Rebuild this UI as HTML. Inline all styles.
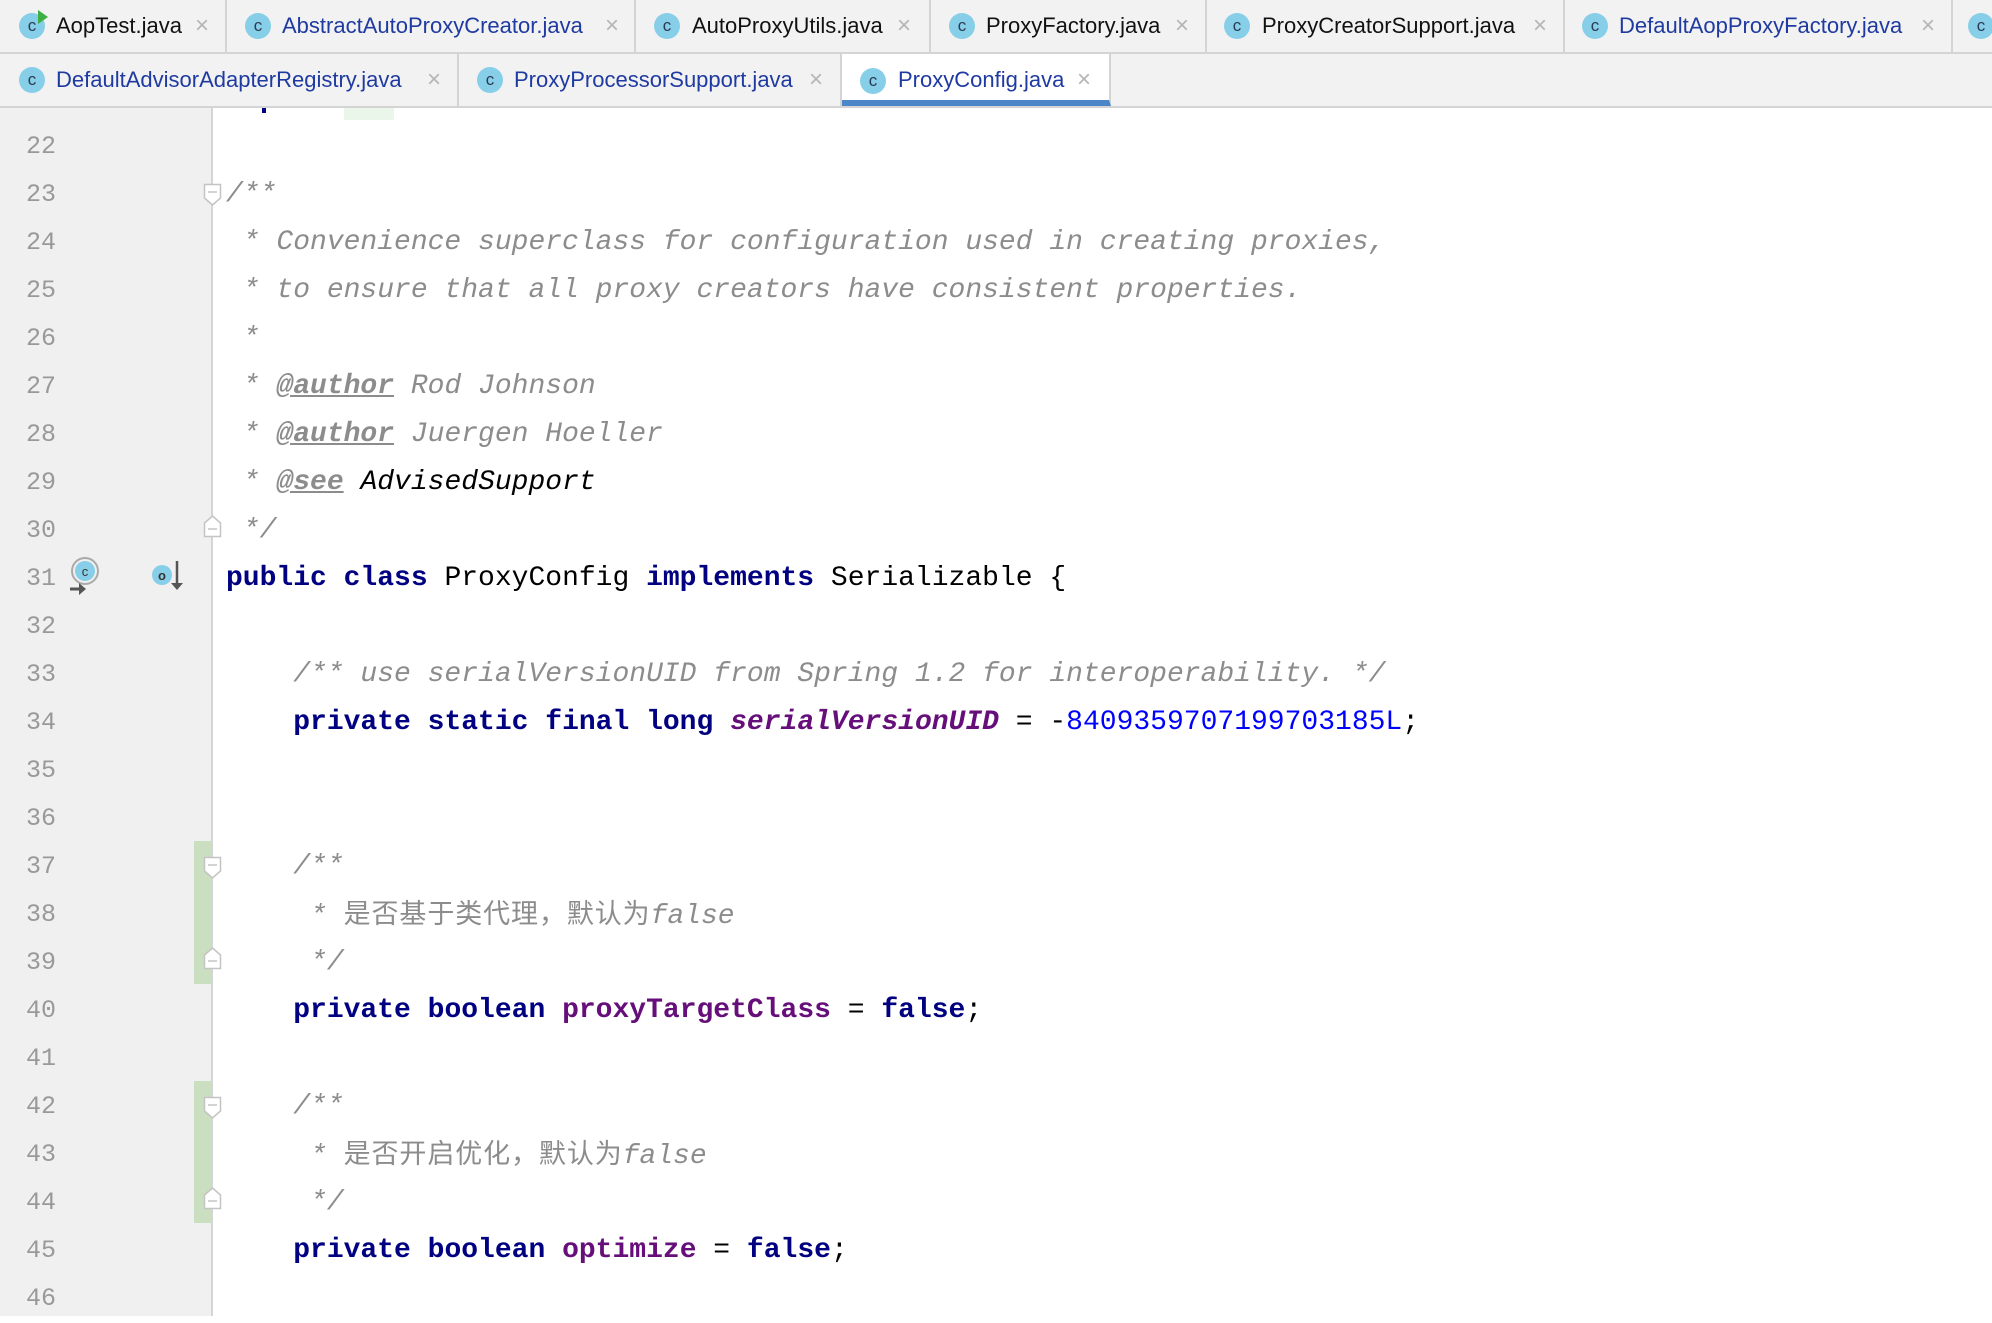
<!DOCTYPE html>
<html><head><meta charset="utf-8"><style>
*{margin:0;padding:0;box-sizing:border-box}
body{width:1992px;height:1316px;overflow:hidden;background:#fff;position:relative;font-family:"Liberation Sans",sans-serif}
.tabrow{position:absolute;left:0;width:1992px;height:54px;background:#f2f2f2;border-bottom:2px solid #d4d4d4}
.tab{position:absolute;top:0;height:52px;border-right:2px solid #d4d4d4}
.ic{position:absolute;top:13px;width:26px;height:26px;border-radius:50%;background:#87cfe8;color:#2b3a55;font-size:17px;line-height:25px;text-align:center;font-family:"Liberation Sans",sans-serif}
.tt{position:absolute;top:0;line-height:52px;font-size:22px;white-space:nowrap}
.x{position:absolute;top:0;line-height:52px;font-size:24px;color:#b5b5b5}
.blue{color:#1f3aa0}.blk{color:#111}
.gut{position:absolute;left:0;top:108px;width:213px;height:1208px;background:#f0f0f0;border-right:2px solid #d5d5d5}
.ln{position:absolute;left:0;width:56px;text-align:right;font-family:"Liberation Mono",monospace;font-size:25px;color:#999;height:48px;line-height:48px}
.cl{position:absolute;left:226px;height:48px;line-height:48px;font-family:"Liberation Mono","Noto Sans CJK SC",monospace;font-size:28px;white-space:pre;color:#000}
.c{color:#8c8c8c;font-style:italic}
.k{color:#000080;font-weight:bold}
.f{color:#660e7a;font-weight:bold}
.fi{color:#660e7a;font-weight:bold;font-style:italic}
.n{color:#0000ff}
.tag{color:#8c8c8c;font-weight:bold;text-decoration:underline}
.cjk{font-family:"Noto Sans CJK SC",sans-serif;font-style:normal;letter-spacing:0.9px;font-size:27px}
.bar{position:absolute;left:194px;width:18px;background:#c9dfc0}
.fold{position:absolute;left:203px}
</style></head><body>

<div class="tabrow" style="top:0">
 <div class="tab" style="left:0;width:227px"><div class="ic" style="left:19px">c</div><div style="position:absolute;left:38px;top:10px;width:0;height:0;border-left:10px solid #3cb043;border-top:7px solid transparent;border-bottom:7px solid transparent"></div><div class="tt blk" style="left:56px">AopTest.java</div><div class="x" style="left:195px">×</div></div>
 <div class="tab" style="left:227px;width:409px"><div class="ic" style="left:18px">c</div><div class="tt blue" style="left:55px">AbstractAutoProxyCreator.java</div><div class="x" style="left:378px">×</div></div>
 <div class="tab" style="left:636px;width:295px"><div class="ic" style="left:18px">c</div><div class="tt blk" style="left:56px">AutoProxyUtils.java</div><div class="x" style="left:261px">×</div></div>
 <div class="tab" style="left:931px;width:276px"><div class="ic" style="left:18px">c</div><div class="tt blk" style="left:55px">ProxyFactory.java</div><div class="x" style="left:244px">×</div></div>
 <div class="tab" style="left:1207px;width:358px"><div class="ic" style="left:17px">c</div><div class="tt blk" style="left:55px">ProxyCreatorSupport.java</div><div class="x" style="left:326px">×</div></div>
 <div class="tab" style="left:1565px;width:388px"><div class="ic" style="left:17px">c</div><div class="tt blue" style="left:54px">DefaultAopProxyFactory.java</div><div class="x" style="left:356px">×</div></div>
 <div class="ic" style="left:1968px">c</div>
</div>
<div class="tabrow" style="top:54px">
 <div class="tab" style="left:0;width:459px"><div class="ic" style="left:19px">c</div><div class="tt blue" style="left:56px">DefaultAdvisorAdapterRegistry.java</div><div class="x" style="left:427px">×</div></div>
 <div class="tab" style="left:459px;width:383px"><div class="ic" style="left:18px">c</div><div class="tt blue" style="left:55px">ProxyProcessorSupport.java</div><div class="x" style="left:350px">×</div></div>
 <div class="tab" style="left:842px;width:269px;background:#fff;height:52px;border-bottom:6px solid #4a86c8"><div class="ic" style="left:18px;top:14px">c</div><div class="tt blue" style="left:56px;line-height:52px">ProxyConfig.java</div><div class="x" style="left:235px;line-height:52px">×</div></div>
</div>

<div class="gut"></div>
<div style="position:absolute;left:344px;top:108px;width:50px;height:12px;background:#eaf6ea"></div>
<div style="position:absolute;left:262px;top:108px;width:4px;height:5px;background:#000080"></div>

<div class="bar" style="top:841px;height:143px"></div>
<div class="bar" style="top:1081px;height:142px"></div>

<svg class="fold" style="top:183px" width="20" height="24"><path d="M1.5 1.5H17.5V15L9.5 22L1.5 15Z" fill="#fff" stroke="#c4c4c4" stroke-width="1.5"/><path d="M5 9H14" stroke="#c4c4c4" stroke-width="1.5"/></svg>
<svg class="fold" style="top:514px" width="20" height="24"><path d="M1.5 22.5H17.5V9L9.5 2L1.5 9Z" fill="#fff" stroke="#c4c4c4" stroke-width="1.5"/><path d="M5 15H14" stroke="#c4c4c4" stroke-width="1.5"/></svg>
<svg class="fold" style="top:856px" width="20" height="24"><path d="M1.5 1.5H17.5V15L9.5 22L1.5 15Z" fill="#fff" stroke="#c4c4c4" stroke-width="1.5"/><path d="M5 9H14" stroke="#c4c4c4" stroke-width="1.5"/></svg>
<svg class="fold" style="top:946px" width="20" height="24"><path d="M1.5 22.5H17.5V9L9.5 2L1.5 9Z" fill="#fff" stroke="#c4c4c4" stroke-width="1.5"/><path d="M5 15H14" stroke="#c4c4c4" stroke-width="1.5"/></svg>
<svg class="fold" style="top:1096px" width="20" height="24"><path d="M1.5 1.5H17.5V15L9.5 22L1.5 15Z" fill="#fff" stroke="#c4c4c4" stroke-width="1.5"/><path d="M5 9H14" stroke="#c4c4c4" stroke-width="1.5"/></svg>
<svg class="fold" style="top:1186px" width="20" height="24"><path d="M1.5 22.5H17.5V9L9.5 2L1.5 9Z" fill="#fff" stroke="#c4c4c4" stroke-width="1.5"/><path d="M5 15H14" stroke="#c4c4c4" stroke-width="1.5"/></svg>

<svg style="position:absolute;left:66px;top:556px" width="40" height="42" viewBox="0 0 40 42">
 <circle cx="19" cy="15" r="13" fill="none" stroke="#aaa" stroke-width="2"/>
 <circle cx="19" cy="15" r="10" fill="#87cfe8"/>
 <text x="19" y="20" font-size="13" text-anchor="middle" fill="#333" font-family="Liberation Sans">c</text>
 <path d="M4 33 H14" stroke="#555" stroke-width="3"/><path d="M13 27 L20 33 L13 39 Z" fill="#555"/>
</svg>
<svg style="position:absolute;left:150px;top:559px" width="36" height="34" viewBox="0 0 36 34">
 <circle cx="12" cy="16" r="10" fill="#87cfe8"/>
 <text x="12" y="21" font-size="13" text-anchor="middle" fill="#333" font-weight="bold" font-family="Liberation Sans">o</text>
 <path d="M27 2 V26" stroke="#555" stroke-width="2.5"/><path d="M21 24 L27 31 L33 24 Z" fill="#555"/>
</svg>

<div class="ln" style="top:123px">22</div>
<div class="ln" style="top:171px">23</div>
<div class="ln" style="top:219px">24</div>
<div class="ln" style="top:267px">25</div>
<div class="ln" style="top:315px">26</div>
<div class="ln" style="top:363px">27</div>
<div class="ln" style="top:411px">28</div>
<div class="ln" style="top:459px">29</div>
<div class="ln" style="top:507px">30</div>
<div class="ln" style="top:555px">31</div>
<div class="ln" style="top:603px">32</div>
<div class="ln" style="top:651px">33</div>
<div class="ln" style="top:699px">34</div>
<div class="ln" style="top:747px">35</div>
<div class="ln" style="top:795px">36</div>
<div class="ln" style="top:843px">37</div>
<div class="ln" style="top:891px">38</div>
<div class="ln" style="top:939px">39</div>
<div class="ln" style="top:987px">40</div>
<div class="ln" style="top:1035px">41</div>
<div class="ln" style="top:1083px">42</div>
<div class="ln" style="top:1131px">43</div>
<div class="ln" style="top:1179px">44</div>
<div class="ln" style="top:1227px">45</div>
<div class="ln" style="top:1275px">46</div>

<div class="cl c" style="top:171px">/**</div>
<div class="cl c" style="top:219px"> * Convenience superclass for configuration used in creating proxies,</div>
<div class="cl c" style="top:267px"> * to ensure that all proxy creators have consistent properties.</div>
<div class="cl c" style="top:315px"> *</div>
<div class="cl c" style="top:363px"> * <span class="tag">@author</span> Rod Johnson</div>
<div class="cl c" style="top:411px"> * <span class="tag">@author</span> Juergen Hoeller</div>
<div class="cl c" style="top:459px"> * <span class="tag">@see</span> <span style="color:#000">AdvisedSupport</span></div>
<div class="cl c" style="top:507px"> */</div>
<div class="cl" style="top:555px"><span class="k">public class</span> ProxyConfig <span class="k">implements</span> Serializable {</div>
<div class="cl c" style="top:651px">    /** use serialVersionUID from Spring 1.2 for interoperability. */</div>
<div class="cl" style="top:699px">    <span class="k">private static final long</span> <span class="fi">serialVersionUID</span> = -<span class="n">8409359707199703185L</span>;</div>
<div class="cl c" style="top:843px">    /**</div>
<div class="cl c" style="top:888px">     * <span class="cjk">是否基于类代理，默认为</span>false</div>
<div class="cl c" style="top:939px">     */</div>
<div class="cl" style="top:987px">    <span class="k">private boolean</span> <span class="f">proxyTargetClass</span> = <span class="k">false</span>;</div>
<div class="cl c" style="top:1083px">    /**</div>
<div class="cl c" style="top:1128px">     * <span class="cjk">是否开启优化，默认为</span>false</div>
<div class="cl c" style="top:1179px">     */</div>
<div class="cl" style="top:1227px">    <span class="k">private boolean</span> <span class="f">optimize</span> = <span class="k">false</span>;</div>
</body></html>
